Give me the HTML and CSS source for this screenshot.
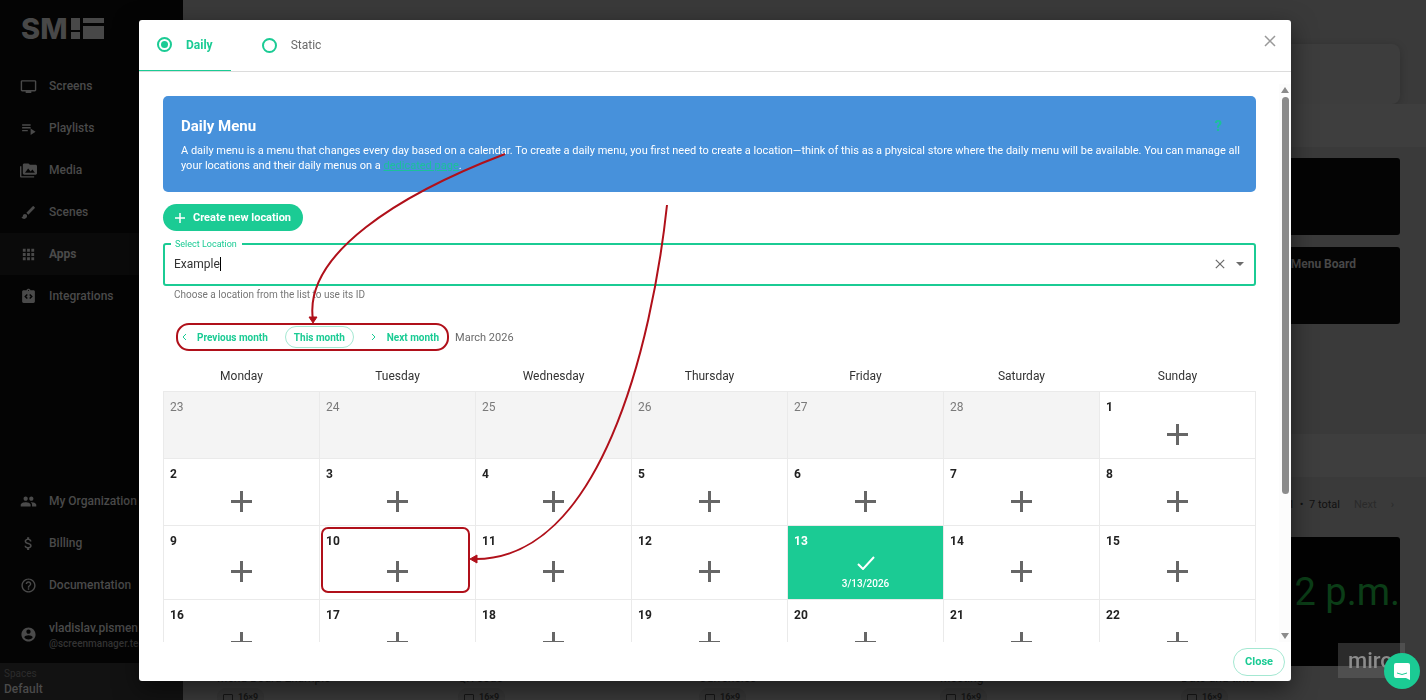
FILE: index.html
```html
<!DOCTYPE html>
<html lang="en">
<head>
    <meta charset="UTF-8">
    <meta name="viewport" content="width=device-width, initial-scale=1.0">
    <title>Daily Menu</title>
    <link rel="stylesheet" href="styles.css">
</head>
<body>
    <aside class="sidebar">
        <svg class="logo" width="84" height="24" viewBox="0 0 84 24">
            <text class="logo-text" x="-1" y="22">SM</text>
            <path d="M49 1h9v12h-9zM49 15h9v7h-9zM61 1h21v5H61zM61 9h21v13H61z"/>
        </svg>
        <nav class="menu">
            <a href="#"><svg viewBox="0 0 24 24"><path d="M21 3H3c-1.100 0-2 .9-2 2v12c0 1.100.9 2 2 2h5v2h8v-2h5c1.100 0 2-.9 2-2V5c0-1.100-.9-2-2-2zm0 14H3V5h18v12z"/></svg>Screens</a>
            <a href="#"><svg viewBox="0 0 24 24"><path d="M3 6h12v2H3zM3 10h12v2H3zM3 14h8v2H3zM15 12v9l7-4.500z"/></svg>Playlists</a>
            <a href="#"><svg viewBox="0 0 24 24"><path d="M2 6H0v14c0 1.100.9 2 2 2h18v-2H2V6zm20-2h-8l-2-2H6c-1.100 0-2 .9-2 2v12c0 1.100.9 2 2 2h16c1.100 0 2-.9 2-2V6c0-1.100-.9-2-2-2zM7 15l4.500-6 3.500 4.500 2.500-3L21 15H7z"/></svg>Media</a>
            <a href="#"><svg viewBox="0 0 24 24"><path d="M7 14c-1.660 0-3 1.340-3 3 0 1.310-1.160 2-2 2 .92 1.220 2.490 2 4 2 2.210 0 4-1.790 4-4 0-1.660-1.340-3-3-3zm13.710-9.370l-1.340-1.340a1 1 0 0 0-1.410 0L9 12.250 11.750 15l8.960-8.960a1 1 0 0 0 0-1.410z"/></svg>Scenes</a>
            <a href="#" class="active"><svg viewBox="0 0 24 24"><path d="M4 8h4V4H4v4zm6 12h4v-4h-4v4zm-6 0h4v-4H4v4zm0-6h4v-4H4v4zm6 0h4v-4h-4v4zm6-10v4h4V4h-4zm-6 4h4V4h-4v4zm6 6h4v-4h-4v4zm0 6h4v-4h-4v4z"/></svg>Apps</a>
            <a href="#"><svg viewBox="0 0 24 24"><path d="M19 3h-4.180C14.400 1.840 13.300 1 12 1s-2.400.84-2.820 2H5c-1.100 0-2 .9-2 2v14c0 1.100.9 2 2 2h14c1.100 0 2-.9 2-2V5c0-1.100-.9-2-2-2zm-8 11.170L9.590 15.600 6 12l3.590-3.600L11 9.830 8.830 12 11 14.170zm1-9.920a.75.75 0 1 1 0-1.500.75.75 0 0 1 0 1.500zm2.410 11.350L13 14.170 15.170 12 13 9.830l1.410-1.430L18 12l-3.590 3.600z"/></svg>Integrations</a>
        </nav>
        <nav class="menu menu-bottom">
            <a href="#"><svg viewBox="0 0 24 24"><path d="M16 11c1.660 0 2.990-1.340 2.990-3S17.660 5 16 5s-3 1.340-3 3 1.340 3 3 3zm-8 0c1.660 0 2.990-1.340 2.990-3S9.660 5 8 5 5 6.340 5 8s1.340 3 3 3zm0 2c-2.330 0-7 1.170-7 3.500V19h14v-2.500C15 14.170 10.330 13 8 13zm8 0c-.29 0-.62.020-.97.050 1.160.84 1.970 1.970 1.970 3.450V19h6v-2.500c0-2.330-4.670-3.500-7-3.500z"/></svg>My Organization</a>
            <a href="#"><svg viewBox="0 0 24 24"><path d="M11.800 10.900c-2.270-.59-3-1.200-3-2.150 0-1.090 1.010-1.850 2.700-1.850 1.780 0 2.440.85 2.500 2.100h2.210c-.07-1.720-1.120-3.300-3.210-3.810V3h-3v2.160c-1.940.42-3.500 1.680-3.500 3.610 0 2.310 1.910 3.460 4.700 4.130 2.500.6 3 1.480 3 2.410 0 .69-.49 1.790-2.700 1.790-2.060 0-2.870-.92-2.980-2.100h-2.200c.12 2.190 1.760 3.420 3.680 3.830V21h3v-2.150c1.950-.37 3.500-1.500 3.500-3.550 0-2.840-2.430-3.810-4.700-4.400z"/></svg>Billing</a>
            <a href="#"><svg viewBox="0 0 24 24"><path d="M11 18h2v-2h-2v2zm1-16C6.480 2 2 6.480 2 12s4.480 10 10 10 10-4.480 10-10S17.520 2 12 2zm0 18c-4.410 0-8-3.590-8-8s3.590-8 8-8 8 3.590 8 8-3.590 8-8 8zm0-14c-2.210 0-4 1.790-4 4h2c0-1.100.9-2 2-2s2 .9 2 2c0 2-3 1.750-3 5h2c0-2.250 3-2.500 3-5 0-2.210-1.790-4-4-4z"/></svg>Documentation</a>
            <a href="#"><svg viewBox="0 0 24 24"><path d="M12 2C6.480 2 2 6.480 2 12s4.480 10 10 10 10-4.480 10-10S17.520 2 12 2zm0 3c1.660 0 3 1.340 3 3s-1.340 3-3 3-3-1.340-3-3 1.340-3 3-3zm0 14.200c-2.500 0-4.710-1.280-6-3.220.03-1.990 4-3.080 6-3.080 1.990 0 5.970 1.090 6 3.080-1.290 1.940-3.500 3.220-6 3.220z"/></svg><span class="user">vladislav.pismen<small>@screenmanager.tec</small></span></a>
        </nav>
        <div class="spaces"><small>Spaces</small>Default</div>
    </aside>

    <main class="page">
        <header class="page-top"><div class="page-card"></div></header>
        <div class="page-band"></div>
        <section class="grid apps">
            <div></div><div></div><div></div><div></div>
            <div class="tile-list">
                <div class="tile"></div>
                <div class="tile tile-name">Menu Board</div>
            </div>
        </section>
        <div class="page-band"></div>
        <div class="pager"><span>1 &nbsp;• &nbsp;7 total</span><span class="muted">Next</span><span class="muted">›</span></div>
        <section class="grid">
            <div class="item"><div class="preview"></div><p>Menu Board Example</p><span class="chip"><i></i>16×9</span></div>
            <div class="item"><div class="preview"></div><p>QR code</p><span class="chip"><i></i>16×9</span></div>
            <div class="item"><div class="preview"></div><p>Currencies</p><span class="chip"><i></i>16×9</span></div>
            <div class="item"><div class="preview"></div><p>Meeting</p><span class="chip"><i></i>16×9</span></div>
            <div class="item"><div class="preview">2 p.m.</div><p>Date and time</p><span class="chip"><i></i>16×9</span></div>
        </section>
    </main>

    <div class="overlay">
        <div class="dialog" role="dialog" aria-label="Daily Menu">
            <header class="tabs">
                <label class="tab selected"><input type="radio" name="type" checked>Daily</label>
                <label class="tab"><input type="radio" name="type">Static</label>
                <button class="icon-btn dismiss" aria-label="Dismiss"><svg width="12" height="12" viewBox="0 0 12 12"><path d="M1 1l10 10M11 1L1 11"/></svg></button>
            </header>

            <div class="body">
                <div class="content">
                    <section class="banner">
                        <div class="banner-head">
                            <h1>Daily Menu</h1>
                            <a href="#" class="help">?</a>
                        </div>
                        <p>A daily menu is a menu that changes every day based on a calendar. To create a daily menu, you first need to create a location—think of this as a physical store where the daily menu will be available. You can manage all your locations and their daily menus on a <a href="#">dedicated page</a>.</p>
                    </section>

                    <button class="create"><svg width="10" height="10" viewBox="0 0 10 10"><path d="M5 0v10M0 5h10"/></svg>Create new location</button>

                    <fieldset class="field">
                        <legend><label for="location">Select Location</label></legend>
                        <div class="entry">
                            <input type="text" id="location" value="Example" size="5">
                            <span class="caret"></span>
                        </div>
                        <button class="icon-btn" aria-label="Clear"><svg width="10" height="10" viewBox="0 0 12 12"><path d="M1 1l10 10M11 1L1 11"/></svg></button>
                        <button class="icon-btn" aria-label="Open"><svg width="8" height="4" viewBox="0 0 8 4"><path class="solid" d="M0 0h8L4 4z"/></svg></button>
                    </fieldset>
                    <p class="hint">Choose a location from the list to use its ID</p>

                    <div class="months">
                        <button><svg width="6" height="8" viewBox="0 0 6 8"><path d="M5 1L2 4l3 3"/></svg>Previous month</button>
                        <button class="current">This month</button>
                        <button><svg width="6" height="8" viewBox="0 0 6 8"><path d="M1 1l3 3-3 3"/></svg>Next month</button>
                        <span>March 2026</span>
                    </div>

                    <table class="calendar">
                        <thead>
                            <tr><th>Monday</th><th>Tuesday</th><th>Wednesday</th><th>Thursday</th><th>Friday</th><th>Saturday</th><th>Sunday</th></tr>
                        </thead>
                        <tbody>
                            <tr>
                                <td class="out">23</td><td class="out">24</td><td class="out">25</td><td class="out">26</td><td class="out">27</td><td class="out">28</td>
                                <td>1<button class="add" aria-label="Add menu"></button></td>
                            </tr>
                            <tr>
                                <td>2<button class="add" aria-label="Add menu"></button></td>
                                <td>3<button class="add" aria-label="Add menu"></button></td>
                                <td>4<button class="add" aria-label="Add menu"></button></td>
                                <td>5<button class="add" aria-label="Add menu"></button></td>
                                <td>6<button class="add" aria-label="Add menu"></button></td>
                                <td>7<button class="add" aria-label="Add menu"></button></td>
                                <td>8<button class="add" aria-label="Add menu"></button></td>
                            </tr>
                            <tr class="tall">
                                <td>9<button class="add" aria-label="Add menu"></button></td>
                                <td>10<button class="add" aria-label="Add menu"></button></td>
                                <td>11<button class="add" aria-label="Add menu"></button></td>
                                <td>12<button class="add" aria-label="Add menu"></button></td>
                                <td class="today">13<button class="done"><svg width="18" height="14" viewBox="0 0 18 14"><path d="M1 8l5 5L17 1"/></svg>3/13/2026</button></td>
                                <td>14<button class="add" aria-label="Add menu"></button></td>
                                <td>15<button class="add" aria-label="Add menu"></button></td>
                            </tr>
                            <tr>
                                <td>16<button class="add" aria-label="Add menu"></button></td>
                                <td>17<button class="add" aria-label="Add menu"></button></td>
                                <td>18<button class="add" aria-label="Add menu"></button></td>
                                <td>19<button class="add" aria-label="Add menu"></button></td>
                                <td>20<button class="add" aria-label="Add menu"></button></td>
                                <td>21<button class="add" aria-label="Add menu"></button></td>
                                <td>22<button class="add" aria-label="Add menu"></button></td>
                            </tr>
                        </tbody>
                    </table>
                </div>
                <div class="scrollbar">
                    <svg width="8" height="6" viewBox="0 0 8 6"><path d="M0 6h8L4 0z"/></svg>
                    <div class="thumb"></div>
                    <svg width="8" height="6" viewBox="0 0 8 6"><path d="M0 0h8L4 6z"/></svg>
                </div>
            </div>

            <footer class="footer"><button class="close">Close</button></footer>
        </div>
    </div>

    <!-- callouts drawn over the dialog -->
    <svg class="notes" width="1426" height="700" viewBox="0 0 1426 700">
        <rect x="177" y="324" width="271" height="26" rx="12"/>
        <rect x="322" y="528" width="147" height="64" rx="6"/>
        <path d="M505 154C400 194 303 254 313 320"/>
        <path d="M667 205C652 345 600 562 473 559"/>
        <path class="head" d="M309 317h8l-4 6zM477 555v8l-7-4z"/>
    </svg>

    <div class="miro">miro</div>
    <button class="chat" aria-label="Open chat">
        <svg width="18" height="18" viewBox="0 0 18 18"><path class="bubble" d="M3 1h12a2 2 0 0 1 2 2v15l-4-2H3a2 2 0 0 1-2-2V3a2 2 0 0 1 2-2z"/><path class="smile" d="M4 11q5 3 10 0"/></svg>
    </button>
</body>
</html>
```
FILE: styles.css
```css
* {
    box-sizing: border-box;
}
body {
    margin: 0;
    height: 100vh;
    display: flex;
    overflow: hidden;
    font-family: Roboto, Arial, sans-serif;
    font-size: 12px;
    background: #3b3b3b;
}
h1, p {
    margin: 0;
}
button {
    font-family: inherit;
    border: none;
    background: none;
    padding: 0;
    cursor: pointer;
}

/* sidebar */
.sidebar {
    width: 183px;
    flex: none;
    display: flex;
    flex-direction: column;
    background: #040404;
    color: #4a4a4a;
}
.logo {
    margin: 17px 0 24px 22px;
    flex: none;
    overflow: visible;
    fill: #484848;
}
.logo-text {
    font-family: Inter, Arial, sans-serif;
    font-size: 29px;
    font-weight: 800;
}
.menu a {
    display: flex;
    align-items: center;
    gap: 12px;
    height: 42px;
    padding-left: 20px;
    color: inherit;
    font-size: 12px;
    font-weight: 500;
    text-decoration: none;
    white-space: nowrap;
}
.menu a.active {
    background: #0a0a0a;
    font-weight: 700;
}
.menu svg {
    width: 17px;
    height: 17px;
    flex: none;
    fill: #4a4a4a;
}
.menu-bottom {
    margin-top: auto;
}
.menu-bottom a:last-child {
    height: 57px;
}
.user small {
    display: block;
    margin-top: 3px;
    font-size: 10px;
    color: #333;
}
.spaces {
    height: 37px;
    padding: 5px 4px;
    background: #121212;
    font-weight: 500;
}
.spaces small {
    display: block;
    margin-bottom: 3px;
    font-size: 10px;
    font-weight: 400;
    color: #2c2c2c;
}

/* page behind the dialog */
.page {
    flex: 1;
    overflow: hidden;
    background: #3a3a3a;
}
.page-top {
    height: 104px;
    padding: 44px 26px 0 24px;
}
.page-card {
    height: 60px;
    border-radius: 8px;
    background: #3d3d3d;
    box-shadow: 0 2px 8px rgba(0, 0, 0, 0.2);
}
.page-band {
    height: 43px;
    background: #3e3e3e;
}
.grid {
    display: grid;
    grid-template-columns: repeat(5, 1fr);
    gap: 12px;
    padding: 0 26px 0 24px;
}
.apps {
    height: 287px;
    padding-top: 11px;
}
.tile-list {
    display: flex;
    flex-direction: column;
    gap: 12px;
}
.tile {
    height: 77px;
    border-radius: 3px;
    background: #040404;
}
.tile-name {
    padding: 10px 44px;
    color: #484848;
    text-align: right;
    font-weight: 700;
}
.pager {
    display: flex;
    justify-content: flex-end;
    align-items: center;
    gap: 14px;
    height: 60px;
    padding: 0 32px 5px 0;
    color: #111;
    font-size: 11px;
}
.pager .muted {
    color: #2a2a2a;
}
.preview {
    height: 129px;
    padding-top: 32px;
    overflow: hidden;
    border-radius: 3px;
    background: #020202;
    color: #0b3d17;
    font-size: 38px;
    line-height: 46px;
    text-align: right;
}
.item p {
    padding: 6px 10px 3px;
    color: #161616;
    line-height: 13px;
}
.chip {
    display: inline-flex;
    align-items: center;
    gap: 5px;
    height: 18px;
    margin-left: 10px;
    padding: 0 6px;
    border-radius: 9px;
    background: #363636;
    color: #161616;
    font-size: 9px;
    font-weight: 700;
}
.chip i {
    width: 10px;
    height: 7px;
    border: 1px solid #161616;
    border-radius: 1px;
}

/* dialog */
.overlay {
    position: fixed;
    inset: 0;
    display: flex;
    padding: 20px 135px 19px 139px;
}
.dialog {
    flex: 1;
    display: flex;
    flex-direction: column;
    min-width: 0;
    border-radius: 3px;
    background: #fff;
    box-shadow: 0 8px 24px rgba(0, 0, 0, 0.5);
}
.tabs {
    display: flex;
    flex: none;
    height: 52px;
    border-bottom: 1px solid #dcdcdc;
}
.tab {
    display: flex;
    align-items: center;
    gap: 14px;
    padding: 0 18px 1px;
    color: #6a6a6a;
    font-size: 12px;
}
.tab + .tab {
    padding-left: 31px;
}
.tab.selected {
    border-bottom: 1px solid #1bcb94;
    color: #1bcb94;
    font-weight: 700;
}
.tab input {
    appearance: none;
    display: grid;
    place-items: center;
    width: 15px;
    height: 15px;
    margin: 0;
    border: 2px solid #1bcb94;
    border-radius: 50%;
}
.tab input:checked::before {
    content: "";
    width: 7px;
    height: 7px;
    border-radius: 50%;
    background: #1bcb94;
}
.icon-btn svg {
    display: block;
    fill: none;
    stroke: #6c6c6c;
    stroke-width: 1.5;
}
.icon-btn .solid {
    fill: #6c6c6c;
    stroke: none;
}
.dismiss {
    margin-left: auto;
    padding: 0 15px 10px;
}
.dismiss svg {
    stroke: #999;
}
.body {
    flex: 1;
    display: flex;
    min-height: 0;
    overflow: hidden;
}
.content {
    flex: 1;
    min-width: 0;
    padding: 24px 23px 0 24px;
}
.banner {
    height: 96px;
    padding: 21px 10px 0 18px;
    border-radius: 5px;
    background: #4791db;
    color: #fff;
}
.banner-head {
    display: flex;
    justify-content: space-between;
    padding-right: 24px;
    line-height: 18px;
    margin-bottom: 8px;
}
.banner h1 {
    font-size: 15px;
    line-height: 18px;
}
.banner .help {
    font-size: 15px;
    font-weight: 700;
    text-decoration: none;
}
.banner p {
    font-size: 11px;
    line-height: 15px;
}
.banner a {
    color: #1bc19a;
}
.create {
    display: flex;
    align-items: center;
    gap: 8px;
    height: 27px;
    margin: 12px 0 7px;
    padding: 0 12px;
    border-radius: 14px;
    background: #1bcb94;
    color: #fff;
    font-size: 11px;
    font-weight: 700;
}
.create svg {
    stroke: #fff;
    stroke-width: 1.5;
}
.field {
    display: flex;
    align-items: center;
    gap: 11px;
    height: 48px;
    margin: 0;
    padding: 0 10px 6px 9px;
    border: 2px solid #1bcb94;
    border-radius: 3px;
}
.field legend {
    margin-left: -3px;
    padding: 0 5px 0 4px;
    color: #1bcb94;
    font-size: 9px;
    line-height: 12px;
}
.entry {
    flex: 1;
    display: flex;
    align-items: center;
}
.entry input {
    field-sizing: content;
    padding: 0;
    border: none;
    outline: none;
    color: #333;
    font-family: inherit;
    font-size: 12px;
}
.caret {
    width: 1px;
    height: 14px;
    background: #000;
}
.hint {
    padding: 3px 11px 0;
    color: #777;
    font-size: 10px;
    line-height: 12px;
}
.months {
    display: flex;
    align-items: center;
    height: 22px;
    margin: 25px 0 19px;
    padding-left: 18px;
    color: #6a6a6a;
    font-size: 11px;
}
.months button {
    display: flex;
    align-items: center;
    gap: 10px;
    height: 22px;
    color: #1bcb94;
    font-size: 10px;
    font-weight: 700;
}
.months .current {
    margin: 0 17px;
    padding: 0 8px;
    border: 1px solid #a4e8d2;
    border-radius: 11px;
}
.months svg {
    fill: none;
    stroke: #1bcb94;
}
.months span {
    margin-left: 16px;
}
.calendar {
    width: 100%;
    table-layout: fixed;
    border-collapse: collapse;
}
.calendar th {
    height: 24px;
    padding: 0 0 6px;
    color: #333;
    font-size: 12px;
    font-weight: 400;
}
.calendar td {
    height: 67px;
    padding: 8px 6px 0;
    border: 1px solid #eaeaea;
    color: #222;
    font-weight: 700;
    line-height: 14px;
    vertical-align: top;
}
.calendar .tall td {
    height: 74px;
}
.calendar .out {
    background: #f4f4f4;
    color: #7a7a7a;
    font-weight: 400;
}
.add {
    display: block;
    width: 21px;
    height: 21px;
    margin: 10px auto 0;
    background: linear-gradient(#666, #666) center / 21px 3px no-repeat, linear-gradient(#666, #666) center / 3px 21px no-repeat;
}
.tall .add {
    margin-top: 13px;
}
.calendar .today {
    background: #1bcb94;
    color: #fff;
}
.done {
    display: block;
    margin: 8px auto 0;
    color: #fff;
    font-size: 10px;
    font-weight: 500;
}
.done svg {
    display: block;
    margin: 0 auto 8px;
    fill: none;
    stroke: #fff;
    stroke-width: 2;
}
.scrollbar {
    width: 12px;
    display: flex;
    flex-direction: column;
    align-items: center;
    margin-top: 12px;
    padding: 3px 0 3px;
    background: #fcfcfc;
}
.scrollbar svg {
    flex: none;
    fill: #8b8b8b;
}
.scrollbar .thumb {
    width: 7px;
    height: 72%;
    margin: 4px 0 auto;
    border-radius: 4px;
    background: #8b8b8b;
}
.footer {
    display: flex;
    flex: none;
    justify-content: flex-end;
    align-items: center;
    height: 39px;
    padding-right: 6px;
}
.close {
    height: 28px;
    padding: 0 11px;
    border: 1px solid #a4e8d2;
    border-radius: 14px;
    color: #1bcb94;
    font-size: 11px;
    font-weight: 700;
}

/* floating layers */
.notes {
    position: absolute;
    left: 0;
    top: 0;
    pointer-events: none;
    fill: none;
    stroke: #b0101a;
    stroke-width: 2;
}
.notes .head {
    fill: #b0101a;
    stroke-width: 1;
}
.miro {
    position: fixed;
    right: 21px;
    bottom: 22px;
    width: 67px;
    height: 35px;
    padding-left: 10px;
    background: rgba(120, 120, 120, 0.35);
    color: #8c8c8c;
    font-size: 22px;
    font-weight: 500;
    line-height: 35px;
}
.chat {
    position: fixed;
    right: 6px;
    bottom: 11px;
    width: 36px;
    height: 36px;
    border-radius: 50%;
    background: #1bcb94;
}
.chat svg {
    display: block;
    margin: auto;
}
.bubble {
    fill: #fff;
}
.smile {
    fill: none;
    stroke: #1bcb94;
}
```
